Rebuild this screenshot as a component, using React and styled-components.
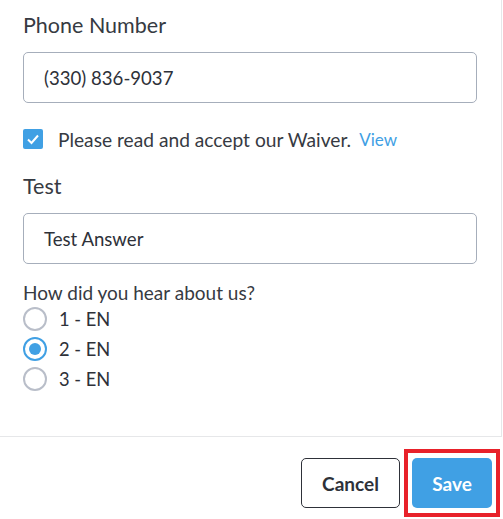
import React from "react";
import styled, { createGlobalStyle } from "styled-components";

const Global = createGlobalStyle`
  html, body { margin: 0; padding: 0; background: #fff; overflow: hidden; }
  body { font-family: Lato, "Noto Sans", "Liberation Sans", sans-serif; color: #2e3139; }
  * { box-sizing: border-box; }
`;

const Page = styled.div`
  width: 503px;
  height: 519px;
  display: flex;
  flex-direction: column;
`;

const Body = styled.div`
  width: 502px;
  height: 437px;
  border-right: 1px solid #e6e7e9;
  border-bottom: 1px solid #e6e7e9;
  padding: 13px 24px 0 23px;
  display: flex;
  flex-direction: column;
`;

const Label = styled.div`
  font-size: 21.5px;
  line-height: 24px;
  color: #363a42;
  margin-bottom: 15px;
`;

const Input = styled.div`
  width: 454px;
  height: 51px;
  border: 1px solid #a6aebb;
  border-radius: 5px;
  padding: 0 20px;
  display: flex;
  align-items: center;
  font-size: 18.6px;
  color: #2e3139;
  margin-bottom: ${(p) => p.$mb || 0}px;
`;

const CheckRow = styled.div`
  display: flex;
  align-items: center;
  height: 22px;
  margin-bottom: 24px;
  font-size: 19.2px;
  color: #363a42;
`;

const Box = styled.span`
  width: 20px;
  height: 20px;
  border-radius: 2px;
  background: #40a0e4;
  display: inline-flex;
  align-items: center;
  justify-content: center;
  margin-right: 15px;
  flex-shrink: 0;
`;

const ViewLink = styled.a`
  color: #3fa0e4;
  font-size: 17px;
  margin-left: 8px;
  text-decoration: none;
`;

const Question = styled.div`
  font-size: 19px;
  line-height: 22px;
  color: #363a42;
`;

const RadioRow = styled.div`
  height: 30px;
  display: flex;
  align-items: center;
  font-size: 18.3px;
  color: #2e3139;
`;

const Circle = styled.span`
  width: 24px;
  height: 24px;
  border-radius: 50%;
  border: 2px solid ${(p) => (p.$on ? "#40a0e4" : "#b9bec9")};
  display: inline-flex;
  align-items: center;
  justify-content: center;
  margin-right: 12px;
  &::after {
    content: "";
    width: 12px;
    height: 12px;
    border-radius: 50%;
    background: ${(p) => (p.$on ? "#40a0e4" : "transparent")};
  }
`;

const Footer = styled.div`
  flex: 1;
  display: flex;
  justify-content: flex-end;
  align-items: flex-start;
  padding: 12px 3px 0 0;
  gap: 4px;
`;

const Cancel = styled.button`
  margin-top: 9px;
  width: 99px;
  height: 50px;
  border: 1px solid #2e3139;
  border-radius: 5px;
  background: #fff;
  font-family: inherit;
  font-weight: 700;
  font-size: 19px;
  color: #2e3139;
`;

const Highlight = styled.div`
  border: 4px solid #e8212a;
  padding: 5px 4px;
`;

const Save = styled.button`
  display: block;
  width: 80px;
  height: 50px;
  border: none;
  border-radius: 5px;
  background: #40a0e4;
  font-family: inherit;
  font-weight: 700;
  font-size: 19px;
  color: #fff;
`;

export default function App() {
  return (
    <Page>
      <Global />
      <Body>
        <Label>Phone Number</Label>
        <Input $mb={25}>(330) 836-9037</Input>
        <CheckRow>
          <Box>
            <svg width="14" height="14" viewBox="0 0 14 14">
              <polyline points="2,7.5 5.5,11 12,3.5" fill="none" stroke="#fff" strokeWidth="2" />
            </svg>
          </Box>
          Please read and accept our Waiver.
          <ViewLink>View</ViewLink>
        </CheckRow>
        <Label>Test</Label>
        <Input $mb={18}>Test Answer</Input>
        <Question>How did you hear about us?</Question>
        <RadioRow><Circle />1 - EN</RadioRow>
        <RadioRow><Circle $on />2 - EN</RadioRow>
        <RadioRow><Circle />3 - EN</RadioRow>
      </Body>
      <Footer>
        <Cancel>Cancel</Cancel>
        <Highlight>
          <Save>Save</Save>
        </Highlight>
      </Footer>
    </Page>
  );
}
